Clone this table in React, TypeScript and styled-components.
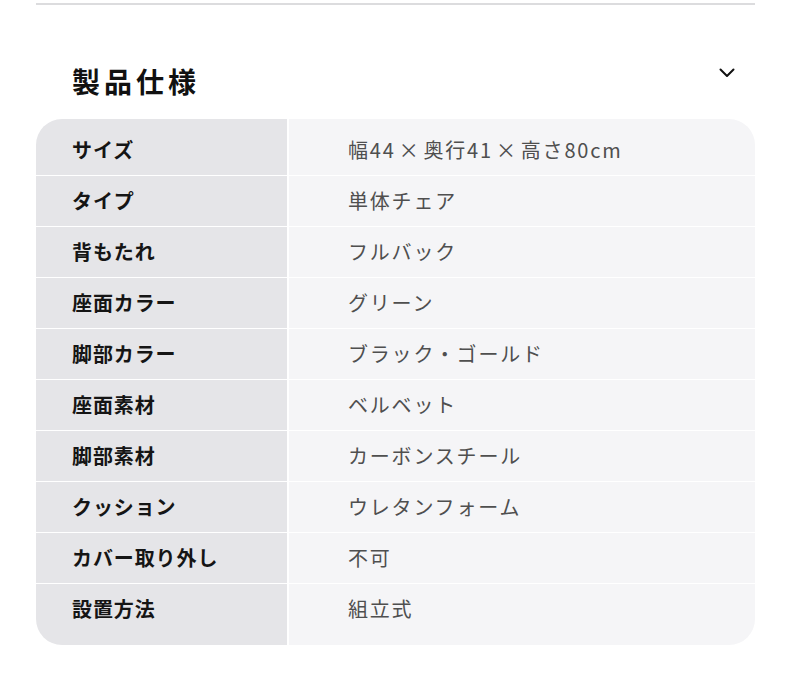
import styled, { createGlobalStyle } from 'styled-components'

const GlobalStyle = createGlobalStyle`
  html, body {
    margin: 0;
    padding: 0;
    background: #ffffff;
  }
  body {
    font-family: "Noto Sans CJK JP", "Noto Sans", sans-serif;
    -webkit-font-smoothing: antialiased;
  }
`

const SPECS: [string, string][] = [
  ['サイズ', '幅44\u200A×\u200A奥行41\u200A×\u200A高さ80cm'],
  ['タイプ', '単体チェア'],
  ['背もたれ', 'フルバック'],
  ['座面カラー', 'グリーン'],
  ['脚部カラー', 'ブラック・ゴールド'],
  ['座面素材', 'ベルベット'],
  ['脚部素材', 'カーボンスチール'],
  ['クッション', 'ウレタンフォーム'],
  ['カバー取り外し', '不可'],
  ['設置方法', '組立式'],
]

type Edge = 'first' | 'last' | undefined

const Page = styled.div`
  width: 719px;
  margin-left: 36px;
  padding-top: 3px;
`

const Section = styled.section`
  border-top: 2px solid #dcdcde;
`

const Header = styled.div`
  display: flex;
  justify-content: space-between;
  align-items: flex-start;
  height: 114px;
  box-sizing: border-box;
  padding: 55px 18px 0 36px;
`

const Title = styled.h2`
  margin: 0;
  font-size: 28px;
  line-height: 42px;
  font-weight: 700;
  letter-spacing: 4px;
  color: #111111;
`

const Toggle = styled.button`
  display: flex;
  align-items: center;
  justify-content: center;
  width: 20px;
  height: 14px;
  margin-top: 6px;
  padding: 0;
  border: none;
  background: none;
  color: #111111;
  cursor: pointer;
`

const Table = styled.div`
  display: grid;
  grid-template-columns: 251px 1fr;
  column-gap: 2px;
  row-gap: 1px;
  background: #ffffff;
  border-radius: 26px;
  overflow: hidden;
`

const Cell = styled.div<{ $edge?: Edge }>`
  display: flex;
  align-items: center;
  height: 50px;
  box-sizing: content-box;
  padding-top: ${({ $edge }) => ($edge === 'first' ? '6px' : '0')};
  padding-bottom: ${({ $edge }) => ($edge === 'last' ? '11px' : '0')};
  font-size: 20px;
  line-height: 26px;
  white-space: nowrap;
`

const Label = styled(Cell)`
  padding-left: 36px;
  background: #e5e5e8;
  color: #151515;
  font-weight: 600;
  letter-spacing: 0.9px;
`

const Value = styled(Cell)`
  padding-left: 59px;
  background: #f5f5f7;
  color: #4f4f4f;
  font-weight: 400;
  letter-spacing: 1.8px;
`

function ChevronDown() {
  return (
    <svg width="16" height="10" viewBox="0 0 16 10" fill="none">
      <path d="M1.5 1.5 L8 8 L14.5 1.5" stroke="currentColor" strokeWidth="2" strokeLinecap="round" strokeLinejoin="round" />
    </svg>
  )
}

export default function App() {
  return (
    <>
      <GlobalStyle />
      <Page>
        <Section>
          <Header>
            <Title>製品仕様</Title>
            <Toggle aria-label="閉じる">
              <ChevronDown />
            </Toggle>
          </Header>
          <Table>
            {SPECS.map(([label, value], i) => {
              const edge: Edge = i === 0 ? 'first' : i === SPECS.length - 1 ? 'last' : undefined
              return [
                <Label key={`l${i}`} $edge={edge}>{label}</Label>,
                <Value key={`v${i}`} $edge={edge}>{value}</Value>,
              ]
            })}
          </Table>
        </Section>
      </Page>
    </>
  )
}
